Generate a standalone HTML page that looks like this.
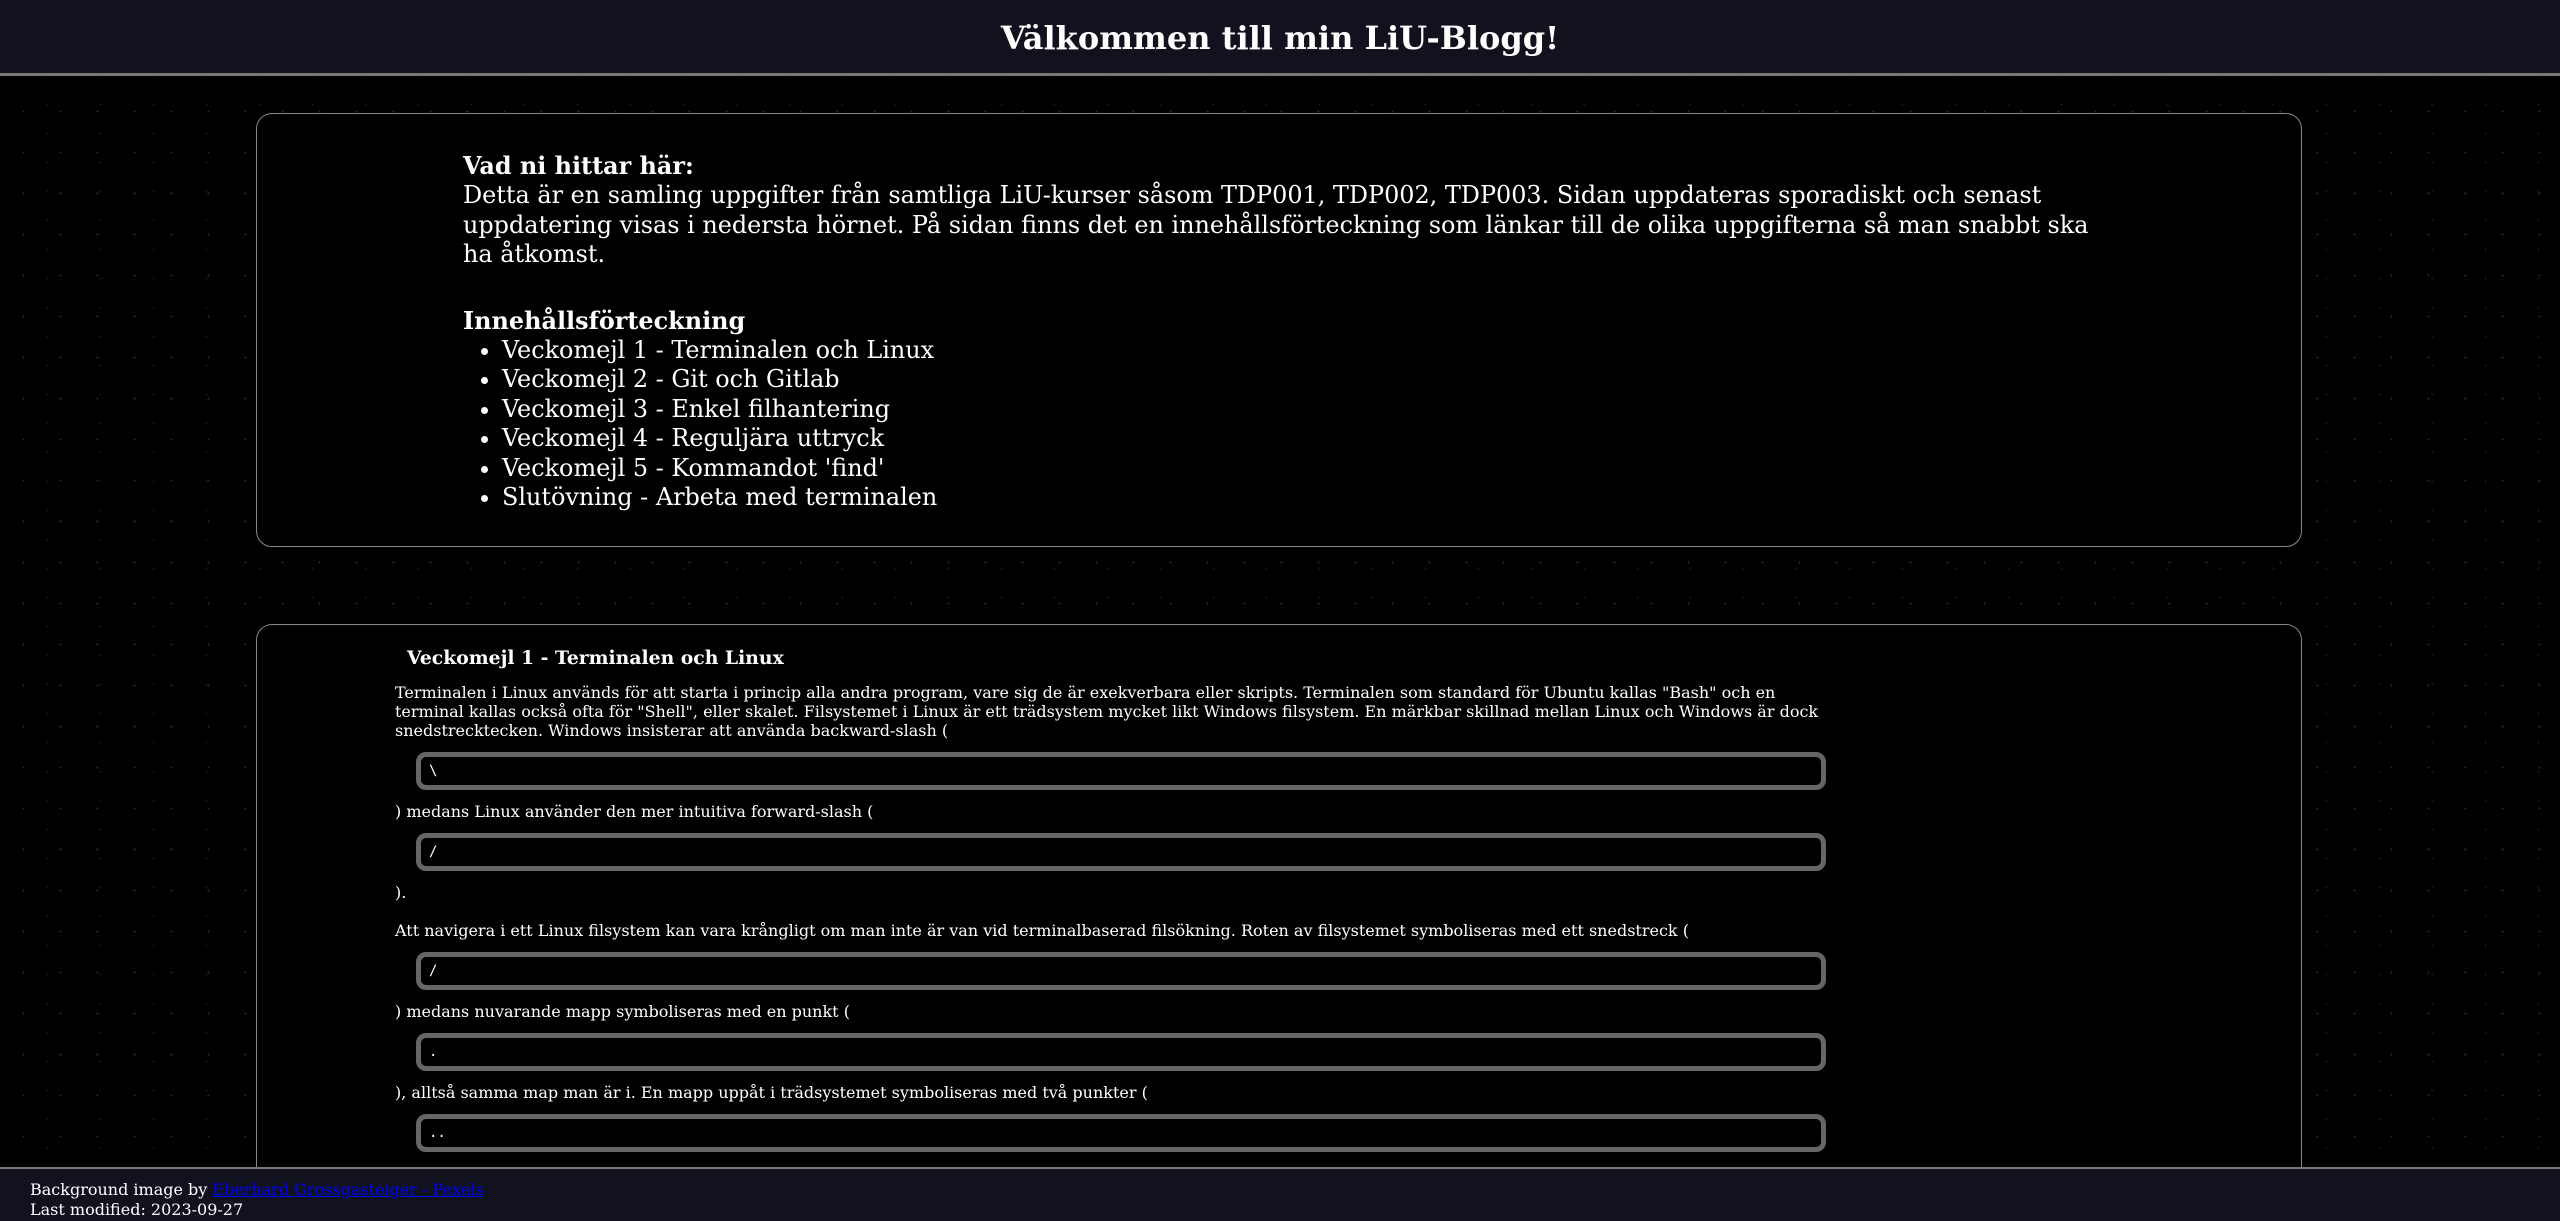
<!DOCTYPE html>
<html><head><meta charset="utf-8"><style>
html,body{margin:0;padding:0;width:2560px;height:1221px;overflow:hidden;}
body{background:#000;color:#fff;font-family:"DejaVu Serif",serif;position:relative;}
header{position:absolute;left:0;top:0;width:2560px;height:73px;background:#12121f;border-bottom:3px solid #777;text-align:center;}
header h1{margin:0;font-size:32px;line-height:76px;font-weight:bold;}
.box1{position:absolute;left:256px;top:113px;width:2046px;height:434px;border:1.5px solid #888;border-radius:16px;box-sizing:border-box;background:#000;}
.box1 .in{position:absolute;left:206px;top:38px;width:1650px;font-size:23.9px;line-height:29.4px;}
.box1 p{margin:0;}
.box1 ul{margin:0;padding-left:39px;}
.box2{position:absolute;left:256px;top:624px;width:2046px;height:597px;border:1.5px solid #888;border-bottom:none;border-radius:16px 16px 0 0;box-sizing:border-box;background:#000;overflow:hidden;}
.box2 .in{position:absolute;left:138px;top:20px;width:1436px;font-size:16px;line-height:19px;}
.box2 h2{font-size:18.8px;margin:0 0 12px 12px;line-height:26px;}
.box2 p{margin:0;}
.code{margin:12px 0 12px 21px;width:1410px;height:38px;box-sizing:border-box;border:5px solid #666;border-radius:10px;font-family:"DejaVu Sans Mono",monospace;font-size:14px;line-height:28px;padding-left:8px;}
footer{position:absolute;left:0;top:1167px;width:2560px;height:54px;background:#12121f;border-top:2px solid #777;font-size:16px;line-height:19.5px;box-sizing:border-box;padding:11px 0 0 30px;}
footer a{color:#00f;text-decoration:underline;}
.stars{position:absolute;left:0;top:0;width:2560px;height:1221px;background-image:radial-gradient(circle,#555 0.8px,transparent 1.2px),radial-gradient(circle,#333 0.8px,transparent 1.2px);background-size:37px 41px,53px 29px;background-position:5px 9px,21px 3px;opacity:.5;}
</style></head><body>
<div class="stars"></div>
<header><h1>Välkommen till min LiU-Blogg!</h1></header>
<div class="box1"><div class="in">
<p><b>Vad ni hittar här:</b><br>Detta är en samling uppgifter från samtliga LiU-kurser såsom TDP001, TDP002, TDP003. Sidan uppdateras sporadiskt och senast uppdatering visas i nedersta hörnet. På sidan finns det en innehållsförteckning som länkar till de olika uppgifterna så man snabbt ska ha åtkomst.</p>
<p style="margin-top:37px"><b>Innehållsförteckning</b></p>
<ul><li>Veckomejl 1 - Terminalen och Linux</li><li>Veckomejl 2 - Git och Gitlab</li><li>Veckomejl 3 - Enkel filhantering</li><li>Veckomejl 4 - Reguljära uttryck</li><li>Veckomejl 5 - Kommandot 'find'</li><li>Slutövning - Arbeta med terminalen</li></ul>
</div></div>
<div class="box2"><div class="in">
<h2>Veckomejl 1 - Terminalen och Linux</h2>
<p>Terminalen i Linux används för att starta i princip alla andra program, vare sig de är exekverbara eller skripts. Terminalen som standard för Ubuntu kallas "Bash" och en terminal kallas också ofta för "Shell", eller skalet. Filsystemet i Linux är ett trädsystem mycket likt Windows filsystem. En märkbar skillnad mellan Linux och Windows är dock snedstrecktecken. Windows insisterar att använda backward-slash (</p>
<div class="code">\</div>
<p>) medans Linux använder den mer intuitiva forward-slash (</p>
<div class="code">/</div>
<p>).</p>
<p style="margin-top:19px">Att navigera i ett Linux filsystem kan vara krångligt om man inte är van vid terminalbaserad filsökning. Roten av filsystemet symboliseras med ett snedstreck (</p>
<div class="code">/</div>
<p>) medans nuvarande mapp symboliseras med en punkt (</p>
<div class="code">.</div>
<p>), alltså samma map man är i. En mapp uppåt i trädsystemet symboliseras med två punkter (</p>
<div class="code">..</div>
</div></div>
<footer>Background image by <a>Eberhard Grossgasteiger - Pexels</a><br>Last modified: 2023-09-27</footer>
</body></html>
